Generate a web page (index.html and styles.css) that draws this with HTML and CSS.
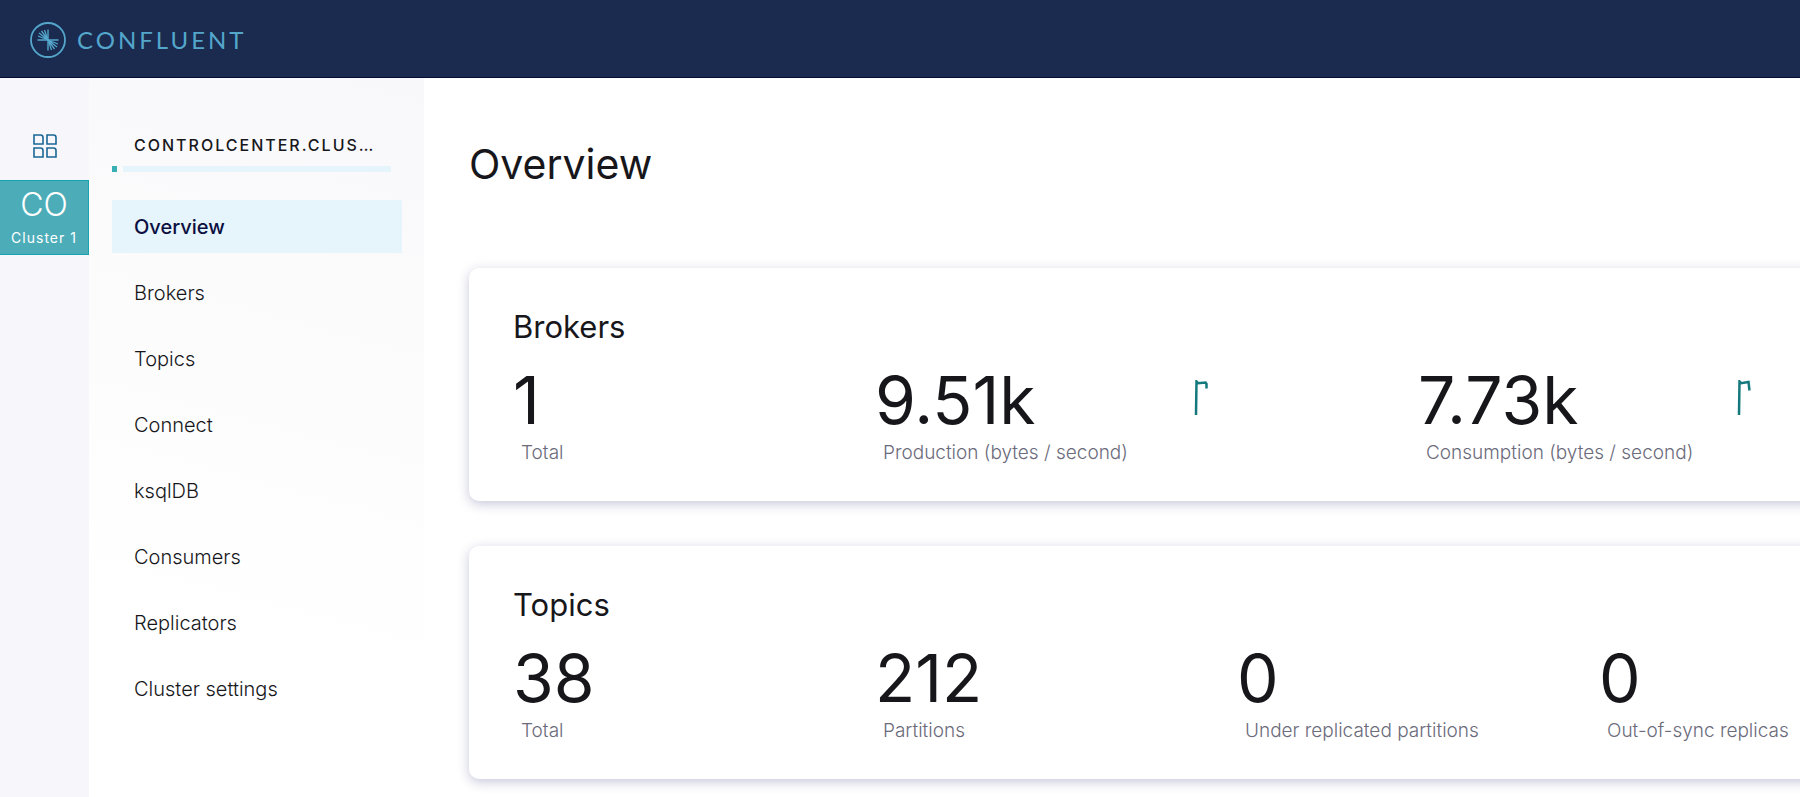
FILE: index.html
```html
<!DOCTYPE html>
<html lang="en">
<head>
<meta charset="utf-8">
<title>Overview</title>
<link rel="stylesheet" href="styles.css">
</head>
<body>
<header class="topbar">
  <a class="brand" href="#">
    <svg class="brand-mark" viewBox="0 0 36 36" fill="none" stroke="currentColor" aria-hidden="true">
      <circle cx="18" cy="18" r="17" stroke-width="1.8"/>
      <path stroke-width="1.400" d="M18 7.500V28.500M7.500 18H28.500"/>
      <path stroke-width="1.300" d="M8 14l10 4M9 11l9 7M11.500 9l6.500 9M14.500 8l3.500 10M18 18l10 4M18 18l9 7M18 18l6.500 9M18 18l3.500 10"/>
    </svg>
    <span class="brand-name">CONFLUENT</span>
  </a>
</header>
<div class="shell">
  <nav class="rail" aria-label="Clusters">
    <a class="rail-home" href="#" aria-label="All clusters">
      <svg class="rail-icon" viewBox="0 0 24 24" fill="none" stroke="currentColor" stroke-width="1.6" aria-hidden="true">
        <path d="M1 1h6.500q2.500 0 2.500 2.500V10H1zM14 1h6.500q2.500 0 2.500 2.500V10H14zM1 14h6.500q2.500 0 2.500 2.500V23H1zM14 14h6.500q2.500 0 2.500 2.500V23H14z"/>
      </svg>
    </a>
    <a class="rail-cluster" href="#">
      <span class="rail-initials">CO</span>
      <span class="rail-label">Cluster 1</span>
    </a>
  </nav>
  <aside class="sidebar">
    <h2 class="cluster-name">CONTROLCENTER.CLUS…</h2>
    <div class="health"><span class="health-on"></span><span class="health-rest"></span></div>
    <nav class="menu" aria-label="Cluster">
      <a class="menu-item menu-item-active" href="#">Overview</a>
      <a class="menu-item" href="#">Brokers</a>
      <a class="menu-item" href="#">Topics</a>
      <a class="menu-item" href="#">Connect</a>
      <a class="menu-item" href="#">ksqlDB</a>
      <a class="menu-item" href="#">Consumers</a>
      <a class="menu-item" href="#">Replicators</a>
      <a class="menu-item" href="#">Cluster settings</a>
    </nav>
  </aside>
  <main class="main">
    <h1 class="title">Overview</h1>
    <div class="cards">
      <section class="card">
        <h2 class="card-title">Brokers</h2>
        <div class="stats">
          <div class="stat">
            <div class="value">1</div>
            <div class="label">Total</div>
          </div>
          <div class="stat stat-wide">
            <div class="reading">
              <div class="value">9.51k</div>
              <div class="label">Production (bytes / second)</div>
            </div>
            <svg class="spark" viewBox="0 0 14 36" fill="none" stroke="currentColor" stroke-width="2.500" aria-hidden="true"><path d="M2 35L2.500 1.500L4 3.200L11.500 2.500L12.500 4V8.500"/></svg>
          </div>
          <div class="stat stat-wide">
            <div class="reading">
              <div class="value">7.73k</div>
              <div class="label">Consumption (bytes / second)</div>
            </div>
            <svg class="spark" viewBox="0 0 14 36" fill="none" stroke="currentColor" stroke-width="2.500" aria-hidden="true"><path d="M2 35L2.500 1.500L4 3.200L11.500 2L12.500 10.500"/></svg>
          </div>
        </div>
      </section>
      <section class="card">
        <h2 class="card-title">Topics</h2>
        <div class="stats">
          <div class="stat">
            <div class="value">38</div>
            <div class="label">Total</div>
          </div>
          <div class="stat">
            <div class="value">212</div>
            <div class="label">Partitions</div>
          </div>
          <div class="stat">
            <div class="value">0</div>
            <div class="label">Under replicated partitions</div>
          </div>
          <div class="stat">
            <div class="value">0</div>
            <div class="label">Out-of-sync replicas</div>
          </div>
        </div>
      </section>
    </div>
  </main>
</div>
</body>
</html>
```
FILE: styles.css
```css
* {
  box-sizing: border-box;
}

body {
  margin: 0;
  min-height: 100vh;
  display: flex;
  flex-direction: column;
  background: #fff;
  color: #17171b;
  font-family: Inter, "Liberation Sans", sans-serif;
}

a {
  color: inherit;
  text-decoration: none;
}

h1,
h2 {
  margin: 0;
  font-weight: 400;
}

.topbar {
  display: flex;
  align-items: center;
  padding: 22px 30px 19px;
  background: #1a2b4f;
  border-bottom: 1px solid #040a33;
}

.brand {
  display: flex;
  align-items: center;
  gap: 11px;
  color: #54a6cb;
}

.brand-mark {
  width: 36px;
  height: 36px;
}

.brand-name {
  font-family: Lato, Inter, sans-serif;
  font-size: 24px;
  line-height: 36px;
  letter-spacing: 3px;
}

.shell {
  flex: 1;
  display: flex;
}

.rail {
  flex: none;
  width: 89px;
  padding-top: 56px;
  background: #f7f7fb;
}

.rail-home {
  display: flex;
  justify-content: center;
  padding-bottom: 22px;
  color: #1b6796;
}

.rail-icon {
  width: 24px;
  height: 24px;
}

.rail-cluster {
  display: flex;
  flex-direction: column;
  align-items: center;
  gap: 5px;
  padding: 6px 0;
  background: #4cadb9;
  border: solid #16a3b0;
  border-width: 1px 1px 1px 0;
  color: #fff;
}

.rail-initials {
  font-size: 32px;
  font-weight: 300;
  line-height: 36px;
}

.rail-label {
  font-size: 14px;
  line-height: 20px;
  letter-spacing: 1px;
}

.sidebar {
  flex: none;
  width: 335px;
  padding: 55px 22px 0 23px;
  background: linear-gradient(195deg, #f8f8fb, #fcfcfc 40%, #fff 75%);
}

.cluster-name {
  padding-left: 22px;
  font-size: 16px;
  font-weight: 500;
  line-height: 24px;
  letter-spacing: 2px;
  white-space: nowrap;
}

.health {
  display: flex;
  gap: 6px;
  height: 6px;
  margin: 9px 11px 28px 0;
}

.health-on {
  width: 5px;
  background: #3aaeb5;
}

.health-rest {
  flex: 1;
  background: #e6f4fb;
}

.menu {
  display: flex;
  flex-direction: column;
  gap: 13px;
}

.menu-item {
  padding: 15px 22px 14px;
  font-size: 20px;
  font-weight: 300;
  line-height: 24px;
}

.menu-item-active {
  background: #e6f4fb;
  color: #0b0f41;
  font-weight: 500;
}

.main {
  flex: 1;
  min-width: 0;
  padding: 58px 45px 0;
  overflow: hidden;
}

.title {
  font-size: 41px;
  line-height: 56px;
}

.cards {
  display: flex;
  flex-direction: column;
  gap: 45px;
  min-width: 1536px;
  margin-top: 76px;
}

.card {
  padding: 41px 44px 36px;
  border-radius: 10px;
  background: #fff;
  box-shadow: 0 3px 12px rgba(30, 30, 110, 0.25);
}

.card-title {
  font-size: 31px;
  line-height: 36px;
}

.stats {
  display: grid;
  grid-template-columns: repeat(8, 1fr);
  margin-top: 23px;
}

.stat {
  grid-column: span 2;
}

.stat-wide {
  grid-column: span 3;
  display: flex;
  justify-content: space-between;
}

.value {
  font-size: 66px;
  line-height: 64px;
}

.label {
  margin-top: 9px;
  padding-left: 8px;
  color: #6b6b7b;
  font-size: 19px;
  font-weight: 300;
  line-height: 24px;
}

.spark {
  width: 14px;
  height: 36px;
  margin: 12px 210px 0 0;
  color: #14797d;
}
```
